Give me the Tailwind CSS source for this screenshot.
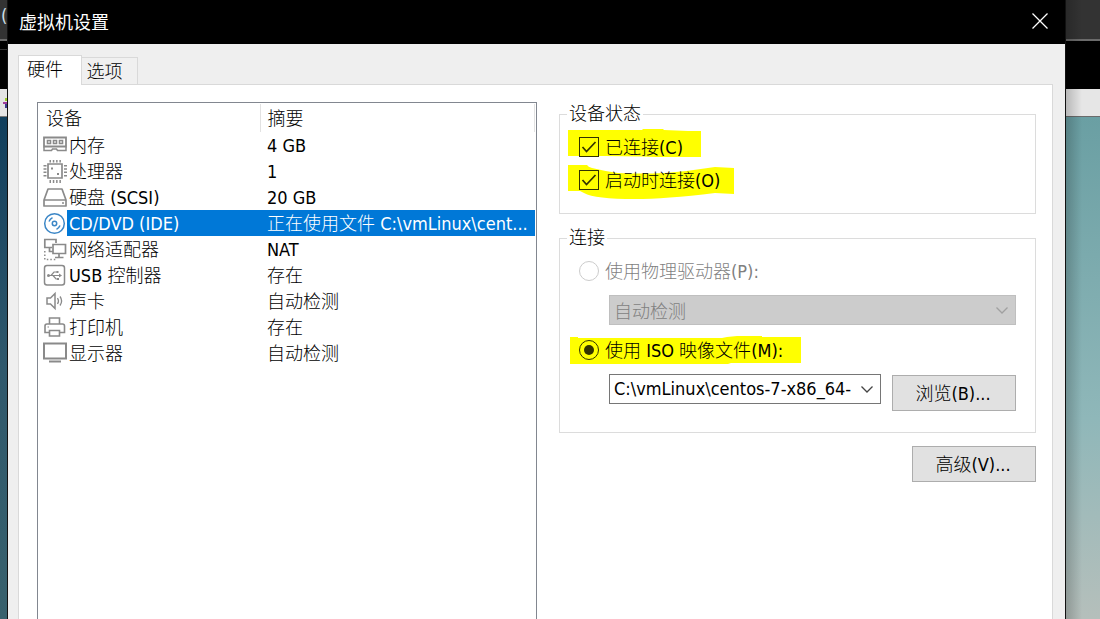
<!DOCTYPE html>
<html lang="zh-CN">
<head>
  <meta charset="UTF-8" />
  <meta name="viewport" content="width=device-width, initial-scale=1.0" />
  <title>虚拟机设置</title>
  <script src="https://cdn.jsdelivr.net/npm/@tailwindcss/browser@4"></script>
</head>
<body class="flex h-screen overflow-hidden bg-black text-lg text-black font-['DejaVu_Sans_Condensed','Noto_Sans_CJK_SC',sans-serif]">

  <!-- 左侧背景 -->
  <div class="flex w-[7px] shrink-0 flex-col overflow-hidden">
    <div class="h-[39px] bg-[#333333] pl-px leading-8 text-[#cfe0ea]">(</div>
    <div class="h-[2px] bg-[#6b6b6b]"></div>
    <div class="h-12 bg-black pt-2"><div class="h-px bg-[#333333]"></div></div>
    <div class="h-[27px] bg-[#e4e4e4]">
      <svg class="h-[27px] w-[7px]" viewBox="0 0 7 27"><path d="M5 9h2v3H5z" fill="#9ccc2c"/><path d="M3 13h4v2H3z" fill="#a03c9c"/><path d="M5 15h2v4H5z" fill="#3c3c8c"/></svg>
    </div>
    <div class="h-px bg-[#777777]"></div>
    <div class="flex-1 bg-linear-to-b from-[#103e5c] via-[#2f586c] to-[#38616d]"></div>
  </div>

  <!-- 对话框 -->
  <main class="flex min-w-0 flex-1 flex-col border-x border-[#111111] bg-[#efefef]">
    <header class="flex h-11 shrink-0 items-center justify-between bg-black pb-[2px] pl-[11px] pr-[17px] text-white">
      <h1 class="font-['Noto_Sans_CJK_SC',sans-serif]">虚拟机设置</h1>
      <button type="button" aria-label="关闭" class="h-4 w-4">
        <svg class="h-4 w-4" viewBox="0 0 16 16" fill="none" stroke="#fff" stroke-width="1.3"><path d="M.5.5l15 15M15.5.5l-15 15"/></svg>
      </button>
    </header>

    <div class="flex items-end pl-[10px] pt-[11px] leading-7">
      <button type="button" class="relative z-10 -mb-px h-[30px] w-16 border border-b-0 border-[#d9d9d9] bg-white pb-1 pr-[10px] font-light">硬件</button>
      <button type="button" class="-ml-px h-[27px] w-[57px] border border-b-0 border-[#d9d9d9] bg-[#f0f0f0] pr-[10px] font-light">选项</button>
    </div>

    <div class="ml-[10px] mr-3 grid flex-1 grid-cols-[500fr_477fr] gap-[22px] border border-b-0 border-[#d9d9d9] bg-white pl-[18px] pr-4 pt-[17px]">

      <!-- 设备列表 -->
      <div class="border border-b-0 border-[#828790] pr-px pt-px">
        <table class="w-full table-fixed border-collapse text-left font-light leading-6">
          <thead>
            <tr class="h-7">
              <th class="w-[29px]"></th>
              <th class="w-[193px] border-r border-[#e2e2e2] pt-[2px] font-light"><span class="-ml-[21px]">设备</span></th>
              <th class="border-r border-[#e2e2e2] pl-[7px] pt-[2px] font-light">摘要</th>
            </tr>
          </thead>
          <tbody class="whitespace-nowrap">
            <tr class="h-[26px]">
              <td class="pl-[5px] pt-[2px]"><svg class="h-6 w-6" viewBox="0 0 24 24" fill="none" stroke="#8a8a8a" stroke-width="1.800"><path d="M1 3.500h22v9H1z"/><path d="M4.500 6.500h3v3h-3zM10.500 6.500h3v3h-3zM16.500 6.500h3v3h-3z" stroke-width="1.600"/><path d="M1 13v3.500h7.500l1-1.500h4l1 1.500H23V13" stroke-width="1.500"/></svg></td>
              <td class="pl-[2px] pt-[2px]">内存</td>
              <td class="pl-[7px] pt-[2px] font-normal">4 GB</td>
            </tr>
            <tr class="h-[26px]">
              <td class="pl-[5px] pt-[2px]"><svg class="h-6 w-6" viewBox="0 0 24 24" fill="none" stroke="#8a8a8a"><path d="M5 4h14v14H5z" stroke-width="1.700"/><path d="M6.500 1h12M6.500 21.500h12" stroke-width="3" stroke-dasharray="1.500 1.800"/><path d="M2 5v13M22.500 5v13" stroke-width="3" stroke-dasharray="1.500 1.800"/><path d="M8 7.500h2v2H8zM14 13h2v2h-2z" fill="#8a8a8a" stroke="none"/></svg></td>
              <td class="pl-[2px] pt-[2px]">处理器</td>
              <td class="pl-[7px] pt-[2px] font-normal">1</td>
            </tr>
            <tr class="h-[26px]">
              <td class="pl-[5px] pt-[2px]"><svg class="h-6 w-6" viewBox="0 0 24 24" fill="none" stroke="#8a8a8a" stroke-width="1.700" stroke-linejoin="round"><path d="M1 14L5 3h14l4 11v6H1zM1 14h22"/><path d="M19 17h2" stroke-width="1.500"/></svg></td>
              <td class="pl-[2px] pt-[2px]">硬盘 <span class="font-normal">(SCSI)</span></td>
              <td class="pl-[7px] pt-[2px] font-normal">20 GB</td>
            </tr>
            <tr class="h-[26px] text-white">
              <td class="pl-[5px] pt-[2px]"><svg class="h-6 w-6" viewBox="0 0 24 24" fill="none" stroke="#3b86c6" stroke-width="1.500"><circle cx="11.500" cy="11.500" r="9.800"/><circle cx="11.500" cy="11.500" r="2.200"/><path d="M6 9.500q1-2.500 3.500-3.800M17 13.500q-1 2.500-3.500 3.800"/></svg></td>
              <td class="bg-[#0078d7] pl-[2px] pt-[2px] font-normal">CD/DVD (IDE)</td>
              <td class="bg-[#0078d7] pl-[7px] pt-[2px]">正在使用文件 <span class="font-normal">C:\vmLinux\cent...</span></td>
            </tr>
            <tr class="h-[26px]">
              <td class="pl-[5px] pt-[2px]"><svg class="h-6 w-6" viewBox="0 0 24 24" fill="none" stroke="#8a8a8a" stroke-width="1.700"><path d="M9 9.500H1.800V1.500H13V5"/><path d="M10 6.500h12.500v9H10zM16 15.500V19M12 19.500h8.500M6.500 9.500v4H10"/><path d="M1.800 13v8.500H14" stroke-width="1.500" stroke-dasharray="1.500 2"/></svg></td>
              <td class="pl-[2px] pt-[2px]">网络适配器</td>
              <td class="pl-[7px] pt-[2px] font-normal">NAT</td>
            </tr>
            <tr class="h-[26px]">
              <td class="pl-[5px] pt-[2px]"><svg class="h-6 w-6" viewBox="0 0 24 24" fill="none" stroke="#8a8a8a" stroke-width="1.500"><rect x="1.500" y="1.500" width="20" height="19.500" rx="2.500"/><path d="M5 11.500h12M8 11.500l3-3.500h3M10 11.500l3 3.500h2" stroke-width="1.200"/><path d="M16 9.500l3 2-3 2zM13.500 7h2v2h-2zM14 14h2v2h-2z" fill="#8a8a8a" stroke="none"/><circle cx="5.500" cy="11.500" r="1.500" fill="#8a8a8a" stroke="none"/></svg></td>
              <td class="pl-[2px] pt-[2px]"><span class="font-normal">USB</span> 控制器</td>
              <td class="pl-[7px] pt-[2px]">存在</td>
            </tr>
            <tr class="h-[26px]">
              <td class="pl-[5px] pt-[2px]"><svg class="h-6 w-6" viewBox="0 0 24 24" fill="none" stroke="#8a8a8a" stroke-width="1.500"><path d="M4 8h3.500L12 3.500v15L7.500 14H4z"/><path d="M14.500 8q2 3 0 6M17 6.500q3.200 4.500 0 9" stroke-width="1.300"/></svg></td>
              <td class="pl-[2px] pt-[2px]">声卡</td>
              <td class="pl-[7px] pt-[2px]">自动检测</td>
            </tr>
            <tr class="h-[26px]">
              <td class="pl-[5px] pt-[2px]"><svg class="h-6 w-6" viewBox="0 0 24 24" fill="none" stroke="#8a8a8a" stroke-width="1.600"><path d="M6.500 8V2h10v6"/><path d="M6.500 16.500H2V10q0-2 2-2h15.500q2 0 2 2v6.500h-5"/><path d="M6.500 14.500h10v5.500h-10z"/><path d="M4.500 11h1.500" stroke-width="1.200"/></svg></td>
              <td class="pl-[2px] pt-[2px]">打印机</td>
              <td class="pl-[7px] pt-[2px]">存在</td>
            </tr>
            <tr class="h-[26px]">
              <td class="pl-[5px] pt-[2px]"><svg class="h-6 w-6" viewBox="0 0 24 24" fill="none" stroke="#8a8a8a" stroke-width="2"><path d="M1 1.500h22v15H1z"/><path d="M6 19.500h12"/></svg></td>
              <td class="pl-[2px] pt-[2px]">显示器</td>
              <td class="pl-[7px] pt-[2px]">自动检测</td>
            </tr>
          </tbody>
        </table>
      </div>

      <!-- 右侧设置 -->
      <div class="flex flex-col items-stretch font-light">
        <fieldset class="flex min-w-0 flex-col gap-[13px] border border-[#dcdcdc] pb-[23px] pl-[19px] pt-[11px]">
          <legend class="-ml-3 px-[2px] leading-6">设备状态</legend>
          <div class="relative isolate flex h-5 items-center gap-[6px]">
            <svg class="absolute -left-[11px] -top-2 -z-10 h-7 w-[134px]" viewBox="0 0 134 28" fill="#ffff00"><path d="M0 1h74l1-1h20l1 1 24 1h13v26l-30 .500-30-1-36-.500H0z"/></svg>
            <input id="connected" type="checkbox" checked class="h-5 w-5 appearance-none border border-[#333300]" />
            <svg class="pointer-events-none absolute left-0 h-5 w-5" viewBox="0 0 20 20" fill="none" stroke="#333300" stroke-width="1.700"><path d="M3.500 10l4 4.500L16.500 5"/></svg>
            <label for="connected" class="pt-[2px]">已连接<span class="font-normal">(C)</span></label>
          </div>
          <div class="relative isolate flex h-5 items-center gap-[6px]">
            <svg class="absolute -left-[11px] -top-[5px] -z-10 h-[34px] w-[167px]" viewBox="0 0 167 34" fill="#ffff00"><path d="M0 0h19q1 2 5 3 12 3 26 5 22 1 47 0 25-2 50-6l19 1v26l-19-1q-50 6-80 6-40 0-51-6l-4-2H0z"/></svg>
            <input id="autoconnect" type="checkbox" checked class="h-5 w-5 appearance-none border border-[#333300]" />
            <svg class="pointer-events-none absolute left-0 h-5 w-5" viewBox="0 0 20 20" fill="none" stroke="#333300" stroke-width="1.700"><path d="M3.500 10l4 4.500L16.500 5"/></svg>
            <label for="autoconnect" class="pt-[2px]">启动时连接<span class="font-normal">(O)</span></label>
          </div>
        </fieldset>

        <fieldset class="mt-3 min-w-0 border border-[#dcdcdc] pb-[21px] pl-[19px] pr-[19px] pt-[11px]">
          <legend class="-ml-3 px-[2px] leading-6">连接</legend>
          <div class="flex h-5 items-center gap-[6px] text-[#7f7f7f]">
            <input id="physical" type="radio" name="source" disabled class="h-5 w-5 appearance-none rounded-full border border-[#cccccc]" />
            <label for="physical" class="pt-[2px]">使用物理驱动器<span class="font-normal">(P):</span></label>
          </div>
          <div class="relative ml-[30px] mt-[14px]">
            <select disabled aria-label="物理驱动器" class="block h-[30px] w-full appearance-none border border-[#bfbfbf] bg-[#cccccc] pl-1 pt-[2px] font-light text-[#7f7f7f] opacity-100">
              <option>自动检测</option>
            </select>
            <svg class="pointer-events-none absolute right-2 top-[9px] h-3 w-3" viewBox="0 0 12 12" fill="none" stroke="#a0a0a0" stroke-width="1.300"><path d="M.5 3.500L6 9l5.500-5.500"/></svg>
          </div>
          <div class="relative isolate mt-[15px] flex h-5 items-center gap-[6px]">
            <svg class="absolute -left-[9px] -top-1 -z-10 h-7 w-[231px]" viewBox="0 0 231 28" fill="#ffff00"><path d="M0 1h8v1h144l5-1 10-1h25v1h39v26h-70l-3 1H0z"/></svg>
            <input id="iso" type="radio" name="source" checked class="flex h-5 w-5 appearance-none items-center justify-center rounded-full border border-[#333300] before:h-[10px] before:w-[10px] before:rounded-full before:bg-[#333300] before:content-['']" />
            <label for="iso" class="pt-[2px]">使用 <span class="font-normal">ISO</span> 映像文件<span class="font-normal">(M):</span></label>
          </div>
          <div class="ml-[30px] mt-[14px] flex items-start gap-[11px]">
            <div class="flex h-[30px] min-w-0 flex-1 items-center border border-[#767676] bg-white pl-1 pr-[7px]">
              <input type="text" aria-label="ISO 映像文件" value="C:\vmLinux\centos-7-x86_64-" class="min-w-0 flex-1 font-normal outline-none" />
              <button type="button" aria-label="展开" class="h-3 w-3 shrink-0"><svg class="h-3 w-3" viewBox="0 0 12 12" fill="none" stroke="#444" stroke-width="1.300"><path d="M.5 3.500L6 9l5.500-5.500"/></svg></button>
            </div>
            <button type="button" class="mt-px h-9 w-[124px] shrink-0 border border-[#adadad] bg-[#e1e1e1] pr-[2px] pt-[2px]">浏览<span class="font-normal">(B)...</span></button>
          </div>
        </fieldset>

        <button type="button" class="mt-[13px] h-9 w-[124px] self-end border border-[#adadad] bg-[#e1e1e1] pr-[2px] pt-[2px]">高级<span class="font-normal">(V)...</span></button>
      </div>
    </div>
  </main>

  <!-- 右侧背景 -->
  <div class="relative flex w-[34px] shrink-0 flex-col">
    <div class="h-[39px] bg-[#333333]"></div>
    <div class="h-[2px] bg-[#6b6b6b]"></div>
    <div class="h-12 bg-black"></div>
    <div class="h-[27px] bg-[#e6e6e6]"></div>
    <div class="h-px bg-[#6b6b6b]"></div>
    <div class="flex-1 bg-linear-to-b from-[#6a9fa3] via-[#8fb7b9] via-60% to-[#b5bfbb]"></div>
    <div class="absolute inset-y-0 left-0 w-4 bg-linear-to-r from-black/20 to-transparent"></div>
  </div>
</body>
</html>
